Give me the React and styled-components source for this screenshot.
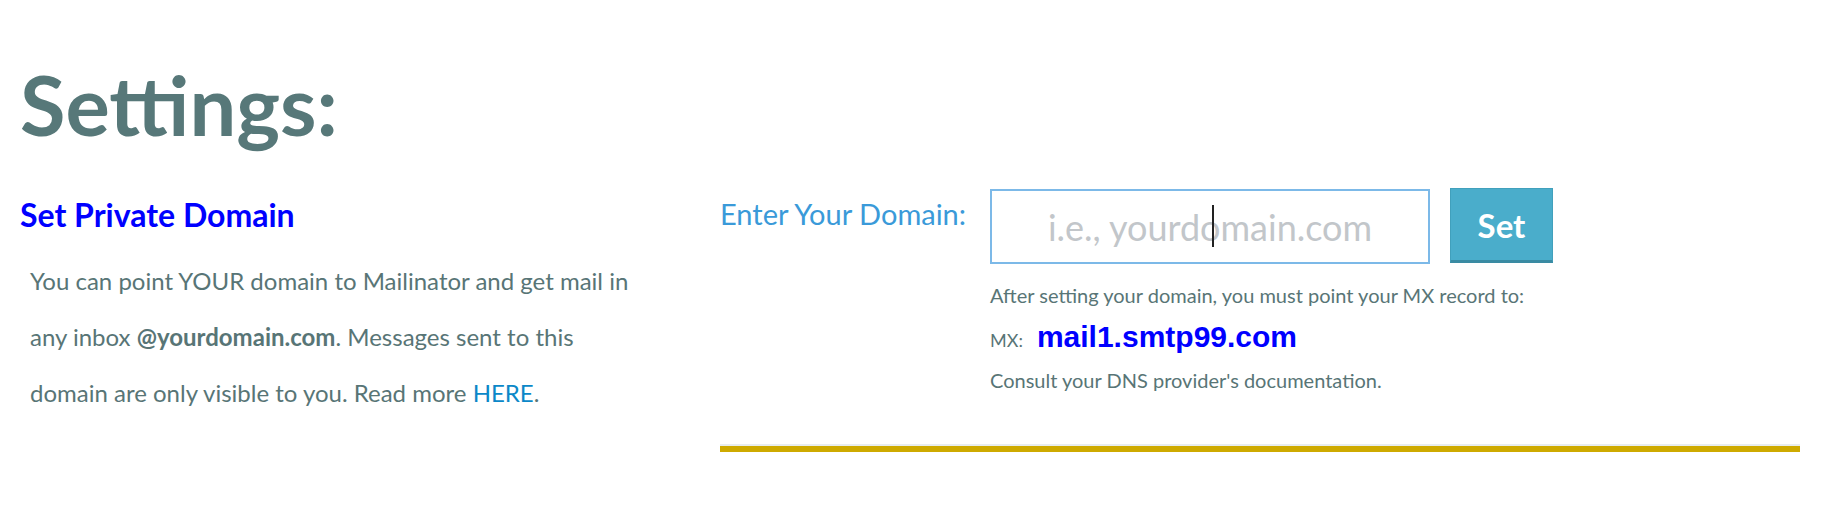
import React from "react";
import styled, { createGlobalStyle } from "styled-components";

const Global = createGlobalStyle`
  body {
    margin: 0;
    background: #fff;
    font-family: Lato, "Open Sans", sans-serif;
  }
`;

const Page = styled.div`
  padding: 0 28px 40px 20px;
  color: #587a7b;
`;

const Title = styled.h1`
  margin: 54px 0 0;
  font-size: 83px;
  line-height: 100px;
  font-weight: 700;
  color: #577879;
`;

const Columns = styled.div`
  display: grid;
  grid-template-columns: 700px 1fr;
`;

const SectionTitle = styled.h2`
  margin: 42px 0 0;
  font-size: 32px;
  line-height: 38px;
  font-weight: 700;
  color: #0000ff;
`;

const Blurb = styled.p`
  margin: 19px 0 0;
  padding-left: 10px;
  font-size: 24px;
  line-height: 56px;
  color: #587576;

  b {
    font-weight: 700;
  }

  a {
    color: #0b88c8;
    text-decoration: none;
  }
`;

const DomainRow = styled.div`
  display: flex;
  align-items: flex-start;
  margin-top: 34px;
`;

const Label = styled.label`
  width: 270px;
  margin-top: 8px;
  font-size: 29px;
  line-height: 35px;
  color: #3a9ad9;
`;

const Field = styled.div`
  position: relative;
  margin-top: 1px;
`;

const Input = styled.input`
  box-sizing: border-box;
  width: 440px;
  height: 75px;
  border: 2px solid #7cb9e8;
  outline: none;
  font-family: Lato, sans-serif;
  font-size: 36px;
  text-align: center;
  color: #333;

  &::placeholder {
    color: #c2c6ca;
  }
`;

const Caret = styled.span`
  position: absolute;
  left: 222px;
  top: 16px;
  width: 2px;
  height: 42px;
  background: #222;
`;

const SetButton = styled.button`
  box-sizing: border-box;
  width: 103px;
  height: 75px;
  margin-left: 20px;
  border: 1px solid #41a0bc;
  border-bottom: 3px solid #3a8ba3;
  background: #4aadcb;
  color: #fff;
  font-family: Lato, sans-serif;
  font-weight: 700;
  font-size: 33px;
  cursor: pointer;
`;

const Notes = styled.div`
  margin-left: 270px;
  margin-top: 16px;
`;

const Note = styled.p`
  margin: 0;
  font-size: 20px;
  line-height: 30px;
  color: #587576;
`;

const MxLine = styled.div`
  display: flex;
  align-items: baseline;
  gap: 14px;
  margin: 7px 0 5px;
  line-height: 40px;
  font-size: 18px;
  color: #587576;
`;

const MxHost = styled.span`
  font-family: "Liberation Sans", Arial, sans-serif;
  font-weight: 700;
  font-size: 30px;
  color: #0000ff;
`;

const GoldRule = styled.div`
  margin-top: 49px;
  border-top: 2px solid #e8edef;
  height: 6px;
  background: #ceaa00;
`;

export default function App() {
  return (
    <>
      <Global />
      <Page>
        <Title>Settings:</Title>
        <Columns>
          <div>
            <SectionTitle>Set Private Domain</SectionTitle>
            <Blurb>
              You can point YOUR domain to Mailinator and get mail in
              <br />
              any inbox <b>@yourdomain.com</b>. Messages sent to this
              <br />
              domain are only visible to you. Read more <a href="#">HERE</a>.
            </Blurb>
          </div>
          <div>
            <DomainRow>
              <Label htmlFor="domain">Enter Your Domain:</Label>
              <Field>
                <Input id="domain" placeholder="i.e., yourdomain.com" />
                <Caret />
              </Field>
              <SetButton>Set</SetButton>
            </DomainRow>
            <Notes>
              <Note>After setting your domain, you must point your MX record to:</Note>
              <MxLine>
                MX:
                <MxHost>mail1.smtp99.com</MxHost>
              </MxLine>
              <Note>Consult your DNS provider's documentation.</Note>
            </Notes>
            <GoldRule />
          </div>
        </Columns>
      </Page>
    </>
  );
}
